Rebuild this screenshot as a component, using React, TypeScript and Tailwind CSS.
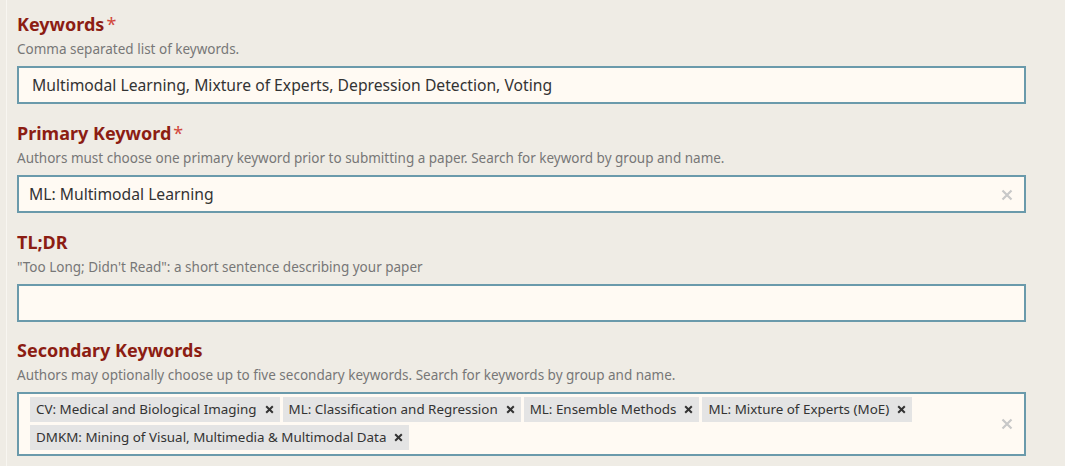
import React from "react";

const chips1 = [
  "CV: Medical and Biological Imaging",
  "ML: Classification and Regression",
  "ML: Ensemble Methods",
  "ML: Mixture of Experts (MoE)",
];
const chips2 = ["DMKM: Mining of Visual, Multimedia & Multimodal Data"];

function Label({ text, req }: { text: string; req?: boolean }) {
  return (
    <div className="h-[24px] leading-[24px] text-[18px] font-bold text-[#8c1d13]">
      {text}
      {req && <span className="ml-[2px] font-normal text-[#d2473c]">*</span>}
    </div>
  );
}

function Desc({ text }: { text: string }) {
  return <div className="mt-[3px] h-[20px] leading-[20px] text-[13.5px] text-[#777]">{text}</div>;
}

function Clear() {
  return (
    <svg width="12" height="12" viewBox="0 0 12 12" className="shrink-0">
      <path d="M1.5 1.5 L10.5 10.5 M10.5 1.5 L1.5 10.5" stroke="#c8c8c8" strokeWidth="2.2" />
    </svg>
  );
}

function Chip({ text }: { text: string }) {
  return (
    <div className="flex h-[25px] items-center bg-[#e4e4e4] pl-[6px] pr-[6px] text-[13.4px] text-[#333]">
      <span>{text}</span>
      <svg width="9" height="9" viewBox="0 0 9 9" className="ml-[8px] shrink-0">
        <path d="M1.2 1.2 L7.8 7.8 M7.8 1.2 L1.2 7.8" stroke="#333" strokeWidth="2" />
      </svg>
    </div>
  );
}

export default function App() {
  return (
    <div
      className="min-h-[466px] w-[1065px] bg-[#efece5]"
      style={{ fontFamily: '"Noto Sans", sans-serif' }}
    >
      <div className="ml-[6px] min-h-[466px] border-l border-[#f8f6f1] pl-[10px] pr-[39px] pt-[12px]">
        <Label text="Keywords" req />
        <Desc text="Comma separated list of keywords." />
        <div className="mt-[7px] flex h-[38px] items-center border-2 border-[#6a9aab] bg-[#fffaf3] pl-[13px] pt-[1px] text-[15.7px] text-[#333]">
          Multimodal Learning, Mixture of Experts, Depression Detection, Voting
        </div>

        <div className="mt-[17px]">
          <Label text="Primary Keyword" req />
          <Desc text="Authors must choose one primary keyword prior to submitting a paper. Search for keyword by group and name." />
          <div className="mt-[7px] flex h-[38px] items-center justify-between border-2 border-[#6a9aab] bg-[#fffaf3] pl-[10px] pr-[11px] pt-[1px] text-[15.7px] text-[#333]">
            <span>ML: Multimodal Learning</span>
            <Clear />
          </div>
        </div>

        <div className="mt-[17px]">
          <Label text="TL;DR" />
          <Desc text={'"Too Long; Didn\'t Read": a short sentence describing your paper'} />
          <div className="mt-[7px] h-[38px] border-2 border-[#6a9aab] bg-[#fffaf3]" />
        </div>

        <div className="mt-[16px]">
          <Label text="Secondary Keywords" />
          <Desc text="Authors may optionally choose up to five secondary keywords. Search for keywords by group and name." />
          <div className="mt-[7px] flex h-[64px] items-center justify-between border-2 border-[#6a9aab] bg-[#fffaf3] pl-[11px] pr-[11px]">
            <div className="flex flex-col gap-[3px] self-start pt-[3px]">
              <div className="flex gap-[3px]">
                {chips1.map((c) => (
                  <Chip key={c} text={c} />
                ))}
              </div>
              <div className="flex gap-[3px]">
                {chips2.map((c) => (
                  <Chip key={c} text={c} />
                ))}
              </div>
            </div>
            <Clear />
          </div>
        </div>
      </div>
    </div>
  );
}
